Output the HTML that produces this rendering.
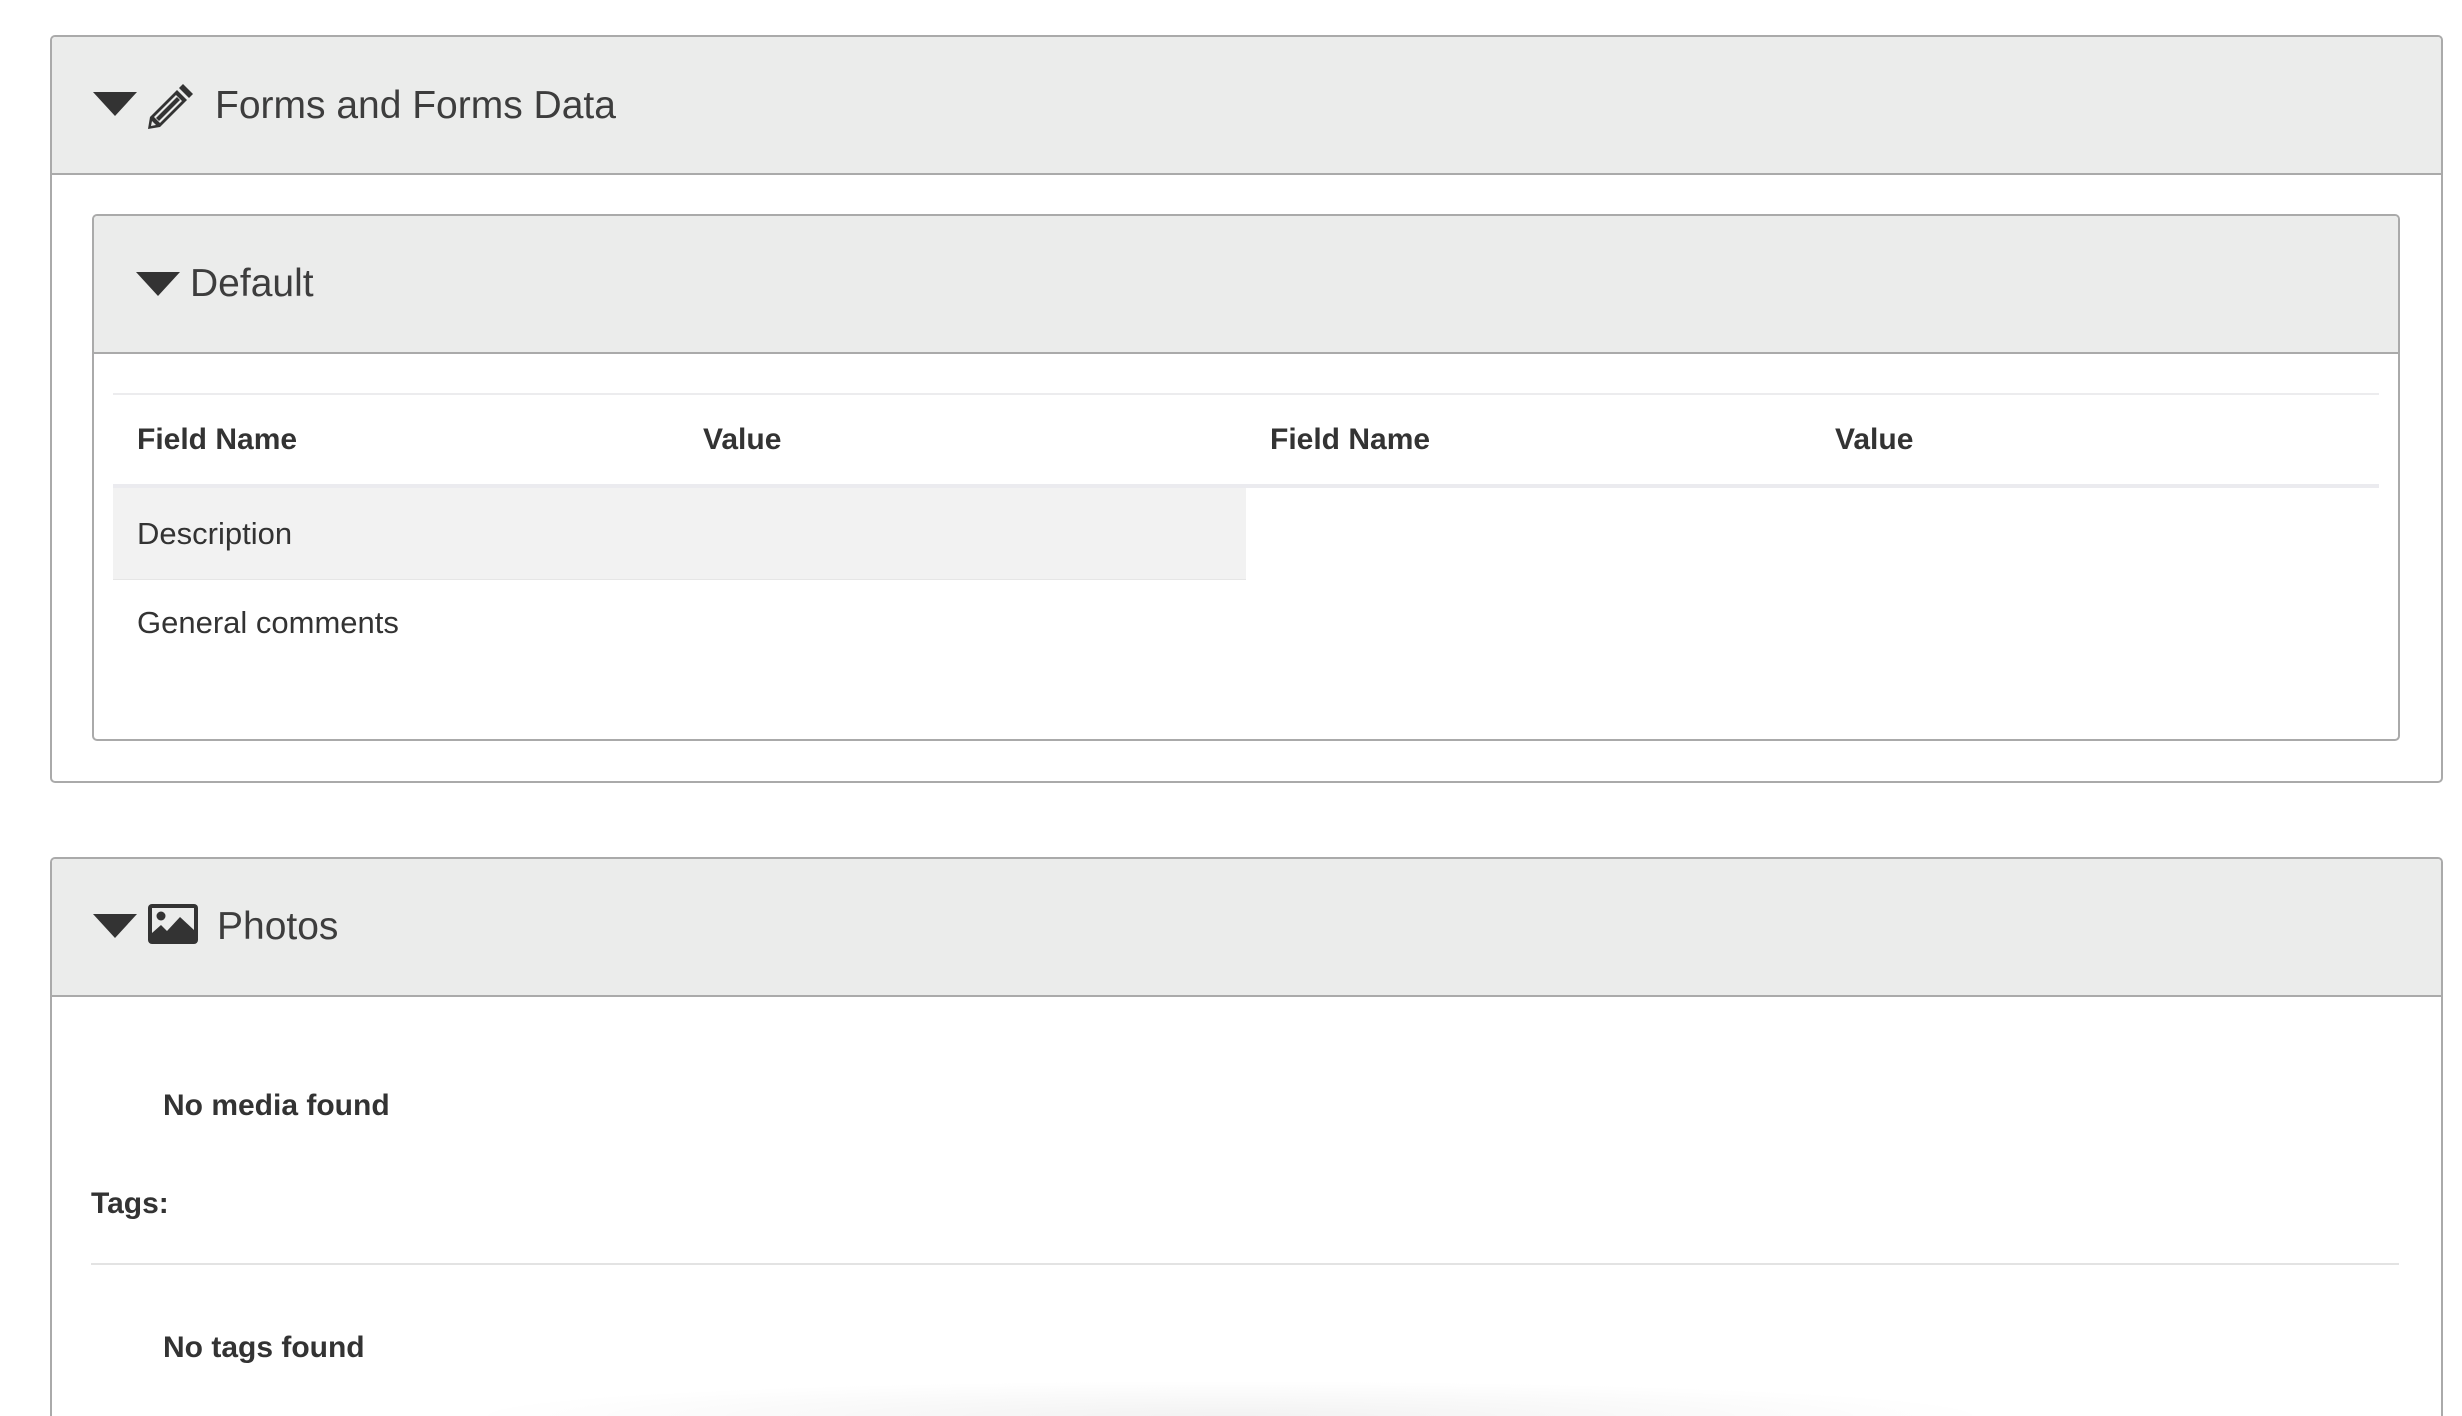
<!DOCTYPE html>
<html style="overflow:hidden;height:1416px"><head><style>
html,body{margin:0;padding:0}
body{width:2462px;height:1416px;background:#fff;overflow:hidden;position:relative;font-family:"Liberation Sans",Arial,sans-serif;color:#333}
#wrap{position:absolute;left:0;top:0;width:2462px;height:1416px;overflow:hidden}
.abs{position:absolute}
.panel{position:absolute;border:2px solid #aaa;border-radius:5px;background:#fff;box-sizing:border-box}
.hdr{position:absolute;left:0;right:0;top:0;background:#ebeceb;border-bottom:2px solid #aaa;border-radius:4px 4px 0 0}
.tri{position:absolute;width:0;height:0;border-left:22px solid transparent;border-right:22px solid transparent;border-top:24px solid #333}
.t{position:absolute;white-space:nowrap;line-height:1}
.b{font-weight:bold}
</style></head><body><div id="wrap">
<div class="panel" style="left:50px;top:35px;width:2393px;height:748px">
 <div class="hdr" style="height:136px"></div>
 <div class="tri" style="left:41px;top:55px"></div>
 <svg class="abs" style="left:94px;top:44px" width="50" height="50" viewBox="0 0 50 50"><path d="M37 3 L47 13 L43 17 L33 7 Z" fill="#333"/><path d="M31 9 L41 19 L14 46 L2 48 L4 36 Z" fill="#333"/><path d="M30 14 L36 20 L14 42 L8 36 Z" fill="#ebeceb"/><path d="M31 16 L34 19 L13 40 L10 37 Z" fill="#333"/><path d="M6 40 L10 44 L5 45 Z" fill="#ebeceb"/></svg>
 <div class="t" style="left:163px;top:49px;font-size:39px;color:#3d3d3d">Forms and Forms Data</div>
</div>
<div class="panel" style="left:92px;top:214px;width:2308px;height:527px">
 <div class="hdr" style="height:136px"></div>
 <div class="tri" style="left:42px;top:56px"></div>
 <div class="t" style="left:96px;top:48px;font-size:39px;color:#3d3d3d">Default</div>
</div>
<div class="abs" style="left:113px;top:393px;width:2266px;height:2px;background:#ececee"></div>
<div class="t b" style="left:137px;top:425px;font-size:30px">Field Name</div>
<div class="t b" style="left:703px;top:425px;font-size:30px">Value</div>
<div class="t b" style="left:1270px;top:425px;font-size:30px">Field Name</div>
<div class="t b" style="left:1835px;top:425px;font-size:30px">Value</div>
<div class="abs" style="left:113px;top:484px;width:2266px;height:4px;background:#ebebef"></div>
<div class="abs" style="left:113px;top:488px;width:1133px;height:91px;background:#f2f2f2;border-bottom:1px solid #e6e6e6"></div>
<div class="t" style="left:137px;top:518px;font-size:31px">Description</div>
<div class="t" style="left:137px;top:607px;font-size:31px">General comments</div>

<div class="panel" style="left:50px;top:857px;width:2393px;height:559px;border-bottom:none;border-radius:5px 5px 0 0">
 <div class="hdr" style="height:136px"></div>
 <div class="tri" style="left:41px;top:55px"></div>
 <svg class="abs" style="left:95px;top:44px" width="52" height="42" viewBox="0 0 52 42"><rect x="1" y="1" width="50" height="40" rx="4" fill="#333"/><rect x="5" y="5" width="42" height="32" fill="#ebeceb"/><circle cx="14" cy="13" r="4.5" fill="#333"/><path d="M5 37 L5 30 L14 22 L20 28 L33 14 L47 27 L47 37 Z" fill="#333"/></svg>
 <div class="t" style="left:165px;top:48px;font-size:39px;color:#3d3d3d">Photos</div>
</div>
<div class="t b" style="left:163px;top:1091px;font-size:30px">No media found</div>
<div class="t b" style="left:91px;top:1189px;font-size:30px">Tags:</div>
<div class="abs" style="left:91px;top:1263px;width:2308px;height:2px;background:#e3e3e3"></div>
<div class="t b" style="left:163px;top:1333px;font-size:30px">No tags found</div>
<div class="abs" style="left:450px;top:1380px;width:1560px;height:36px;background:radial-gradient(ellipse at 50% 100%,rgba(0,0,0,0.05),rgba(0,0,0,0) 70%)"></div>
</div></body></html>
